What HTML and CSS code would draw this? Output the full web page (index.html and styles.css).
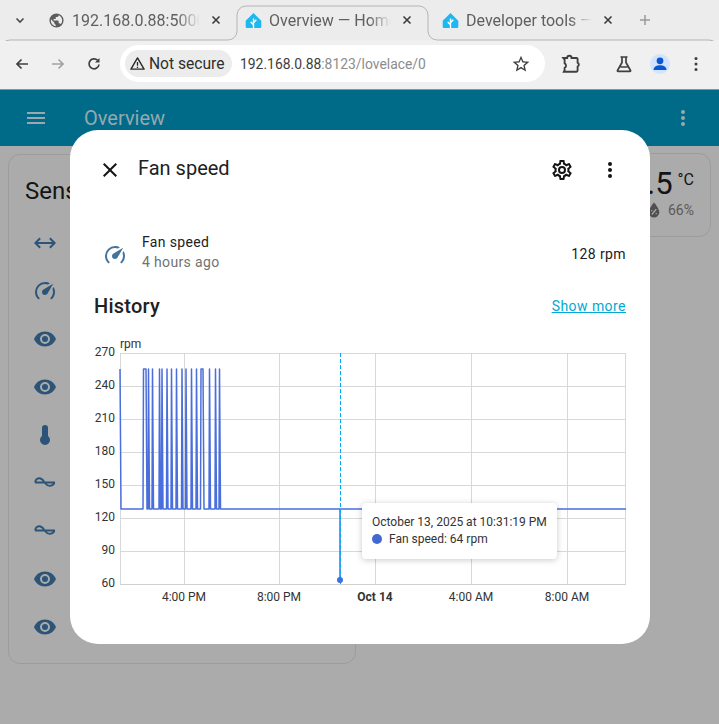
FILE: index.html
```html
<!DOCTYPE html>
<html lang="en">
<head>
<meta charset="utf-8">
<title>Overview – Home Assistant</title>
<link rel="stylesheet" href="styles.css">
</head>
<body>
<div class="window">
  <div class="tabstrip">
    <span class="tab-chevron"><svg viewBox="0 0 12 12" width="12" height="12"><path d="M2.5 4.5L6 8l3.5-3.5" class="stroke-dark"/></svg></span>
    <div class="tab tab-first">
      <svg class="favicon" viewBox="0 0 24 24"><path class="fill-grey" d="M17.9,17.39C17.64,16.59 16.89,16 16,16H15V13A1,1 0 0,0 14,12H8V10H10A1,1 0 0,0 11,9V7H13A2,2 0 0,0 15,5V4.59C17.93,5.77 20,8.64 20,12C20,14.08 19.2,15.97 17.9,17.39M11,19.93C7.05,19.44 4,16.08 4,12C4,11.38 4.08,10.78 4.21,10.21L9,15V16A2,2 0 0,0 11,18M12,2A10,10 0 0,0 2,12A10,10 0 0,0 12,22A10,10 0 0,0 22,12A10,10 0 0,0 12,2Z"/></svg>
      <span class="tab-title">192.168.0.88:5000</span>
      <svg class="tab-close" viewBox="0 0 12 12"><path d="M2.5 2.5l7 7m0-7l-7 7" class="stroke-close"/></svg>
    </div>
    <div class="tab tab-active">
      <svg class="favicon" viewBox="0 0 24 24"><path class="fill-ha" d="M12 1.5L23 12.5V21a1.5 1.5 0 0 1-1.500 1.500H2.500A1.500 1.500 0 0 1 1 21V12.500Z"/><path class="stroke-ha" d="M12 22.500V9M12 18l-4-4M12 15l4-4"/></svg>
      <span class="tab-title">Overview — Home Assistant</span>
      <svg class="tab-close" viewBox="0 0 12 12"><path d="M2.5 2.5l7 7m0-7l-7 7" class="stroke-close"/></svg>
    </div>
    <div class="tab tab-third">
      <svg class="favicon" viewBox="0 0 24 24"><path class="fill-ha" d="M12 1.5L23 12.5V21a1.5 1.500 0 0 1-1.500 1.500H2.500A1.500 1.500 0 0 1 1 21V12.500Z"/><path class="stroke-ha" d="M12 22.500V9M12 18l-4-4M12 15l4-4"/></svg>
      <span class="tab-title">Developer tools — Home</span>
      <svg class="tab-close" viewBox="0 0 12 12"><path d="M2.5 2.5l7 7m0-7l-7 7" class="stroke-close"/></svg>
    </div>
    <svg class="tab-plus" viewBox="0 0 12 12"><path d="M6 1v10M1 6h10" class="stroke-plus"/></svg>
    <svg class="tab-outline" viewBox="0 0 719 41"><path d="M0 48V50A10 10 0 0 1 10 40H228A9 9 0 0 0 237 31V15A9 9 0 0 1 246 6H419A9 9 0 0 1 428 15V31A9 9 0 0 0 437 40H709A10 10 0 0 1 719 50"/></svg>
  </div>

  <div class="toolbar">
    <svg class="tb-icon" viewBox="0 0 16 16"><path class="stroke-tb" d="M14 8H3M7.500 3.500L3 8l4.500 4.500"/></svg>
    <svg class="tb-icon tb-forward" viewBox="0 0 16 16"><path class="stroke-dim" d="M2 8h11M8.500 3.500L13 8l-4.500 4.500"/></svg>
    <svg class="tb-icon tb-reload" viewBox="0 0 16 16"><path class="stroke-tb" d="M13 8.500A5 5 0 1 1 11.500 4.200"/><path class="fill-tb" d="M13.500 2v4.500H9Z"/></svg>
    <div class="omnibox">
      <div class="security">
        <svg class="warn" viewBox="0 0 16 16"><path class="warn-shape" d="M8 2L15 14H1Z"/><path class="warn-mark" d="M8 6.500v4M8 11.500v1.300"/></svg>
        <span>Not secure</span>
      </div>
      <span class="url"><span class="url-host">192.168.0.88</span>:8123/lovelace/0</span>
      <svg class="star" viewBox="0 0 24 24"><path class="fill-tb" d="M12,15.39L8.24,17.66L9.23,13.38L5.91,10.5L10.29,10.13L12,6.090L13.710,10.130L18.090,10.500L14.770,13.380L15.760,17.660M22,9.240L14.810,8.630L12,2L9.190,8.630L2,9.240L7.450,13.970L5.820,21L12,17.270L18.180,21L16.540,13.970L22,9.240Z"/></svg>
    </div>
    <svg class="tb-icon tb-ext" viewBox="0 0 20 20"><path class="stroke-tb" d="M3 4.500h3.500a2 2 0 0 1 4 0H15a1 1 0 0 1 1 1v3.200a2 2 0 0 1 0 3.600V16a1 1 0 0 1-1 1H3.500l.7-1.300v-2.200a2.200 2.200 0 0 0 0-4V6Z"/></svg>
    <svg class="tb-icon tb-flask" viewBox="0 0 20 20"><path class="stroke-tb" d="M6.500 3h7M8 3v5.500L3.500 16.500a.6.6 0 0 0 .5.900h12a.6.6 0 0 0 .5-.900L12 8.500V3M6.500 13h7"/></svg>
    <span class="avatar"><svg viewBox="0 0 20 20" width="20" height="20"><circle class="fill-blue" cx="10" cy="6.800" r="3.400"/><path class="fill-blue" d="M3.500 16c0-3.500 3.500-4.700 6.500-4.700s6.500 1.200 6.500 4.700Z"/></svg></span>
    <svg class="tb-icon tb-menu" viewBox="0 0 16 16"><circle class="fill-tb" cx="8" cy="2.500" r="1.500"/><circle class="fill-tb" cx="8" cy="8" r="1.500"/><circle class="fill-tb" cx="8" cy="13.500" r="1.500"/></svg>
  </div>

  <div class="app">
    <header class="app-header">
      <svg class="header-icon" viewBox="0 0 24 24"><path d="M3,6H21V8H3V6M3,11H21V13H3V11M3,16H21V18H3V16Z"/></svg>
      <span class="header-title">Overview</span>
      <svg class="header-icon header-dots" viewBox="0 0 24 24"><path d="M12,16A2,2 0 0,1 14,18A2,2 0 0,1 12,20A2,2 0 0,1 10,18A2,2 0 0,1 12,16M12,10A2,2 0 0,1 14,12A2,2 0 0,1 12,14A2,2 0 0,1 10,12A2,2 0 0,1 12,10M12,4A2,2 0 0,1 14,6A2,2 0 0,1 12,8A2,2 0 0,1 10,6A2,2 0 0,1 12,4Z"/></svg>
    </header>
    <main class="cards">
      <section class="card card-sensors">
        <h2 class="card-title">Sensors</h2>
        <div class="sensor-row"><svg class="sensor-icon" viewBox="0 0 24 24"><path d="M6.450,17.450L1,12L6.450,6.550L7.860,7.960L4.830,11H19.170L16.140,7.960L17.550,6.550L23,12L17.550,17.450L16.140,16.040L19.170,13H4.830L7.860,16.040L6.450,17.450Z"/></svg></div>
        <div class="sensor-row"><svg class="sensor-icon" viewBox="0 0 24 24"><path d="M12,16A3,3 0 0,1 9,13C9,11.880 9.610,10.900 10.500,10.390L20.210,4.770L14.680,14.350C14.180,15.330 13.170,16 12,16M12,3C13.810,3 15.500,3.500 16.970,4.320L14.870,5.530C14,5.190 13,5 12,5A8,8 0 0,0 4,13C4,15.210 4.890,17.210 6.340,18.650H6.350C6.740,19.040 6.740,19.670 6.350,20.060C5.960,20.450 5.320,20.450 4.930,20.070V20.070C3.120,18.260 2,15.760 2,13A10,10 0 0,1 12,3M22,13C22,15.760 20.880,18.260 19.070,20.070V20.070C18.680,20.450 18.050,20.450 17.660,20.060C17.270,19.670 17.270,19.040 17.660,18.650V18.650C19.110,17.200 20,15.210 20,13C20,12 19.810,11 19.460,10.100L20.670,8C21.500,9.500 22,11.180 22,13Z"/></svg></div>
        <div class="sensor-row"><svg class="sensor-icon" viewBox="0 0 24 24"><path d="M12,9A3,3 0 0,0 9,12A3,3 0 0,0 12,15A3,3 0 0,0 15,12A3,3 0 0,0 12,9M12,17A5,5 0 0,1 7,12A5,5 0 0,1 12,7A5,5 0 0,1 17,12A5,5 0 0,1 12,17M12,4.500C7,4.500 2.730,7.610 1,12C2.730,16.390 7,19.500 12,19.500C17,19.500 21.270,16.390 23,12C21.270,7.610 17,4.500 12,4.500Z"/></svg></div>
        <div class="sensor-row"><svg class="sensor-icon" viewBox="0 0 24 24"><path d="M12,9A3,3 0 0,0 9,12A3,3 0 0,0 12,15A3,3 0 0,0 15,12A3,3 0 0,0 12,9M12,17A5,5 0 0,1 7,12A5,5 0 0,1 12,7A5,5 0 0,1 17,12A5,5 0 0,1 12,17M12,4.500C7,4.500 2.730,7.610 1,12C2.730,16.390 7,19.500 12,19.500C17,19.500 21.270,16.390 23,12C21.270,7.610 17,4.500 12,4.500Z"/></svg></div>
        <div class="sensor-row"><svg class="sensor-icon" viewBox="0 0 24 24"><path d="M15 13V5A3 3 0 0 0 9 5V13A5 5 0 1 0 15 13Z"/></svg></div>
        <div class="sensor-row"><svg class="sensor-icon sensor-wave" viewBox="0 0 24 24"><path d="M2 11.500C3.500 6 8 6 11 10.500L12.500 12.500C14.500 15.500 19 16 21.500 12M2 11.500H22"/></svg></div>
        <div class="sensor-row"><svg class="sensor-icon sensor-wave" viewBox="0 0 24 24"><path d="M2 11.500C3.500 6 8 6 11 10.500L12.500 12.500C14.500 15.500 19 16 21.500 12M2 11.500H22"/></svg></div>
        <div class="sensor-row"><svg class="sensor-icon" viewBox="0 0 24 24"><path d="M12,9A3,3 0 0,0 9,12A3,3 0 0,0 12,15A3,3 0 0,0 15,12A3,3 0 0,0 12,9M12,17A5,5 0 0,1 7,12A5,5 0 0,1 12,7A5,5 0 0,1 17,12A5,5 0 0,1 12,17M12,4.500C7,4.500 2.730,7.610 1,12C2.730,16.390 7,19.500 12,19.500C17,19.500 21.270,16.390 23,12C21.270,7.610 17,4.500 12,4.500Z"/></svg></div>
        <div class="sensor-row"><svg class="sensor-icon" viewBox="0 0 24 24"><path d="M12,9A3,3 0 0,0 9,12A3,3 0 0,0 12,15A3,3 0 0,0 15,12A3,3 0 0,0 12,9M12,17A5,5 0 0,1 7,12A5,5 0 0,1 12,7A5,5 0 0,1 17,12A5,5 0 0,1 12,17M12,4.500C7,4.500 2.730,7.610 1,12C2.730,16.390 7,19.500 12,19.500C17,19.500 21.270,16.390 23,12C21.270,7.610 17,4.500 12,4.500Z"/></svg></div>
      </section>
      <section class="card card-weather">
        <div class="temp"><span class="temp-value">18.5</span><span class="temp-unit">°C</span></div>
        <div class="humidity">
          <svg class="drop" viewBox="0 0 24 24"><path class="fill-drop" d="M12,2C12,2 5,10 5,15A7,7 0 0,0 19,15C19,10 12,2 12,2Z"/><path class="drop-mark" d="M9 18l6-7M9 12v1.500M15 16v1.500"/></svg>
          <span>66%</span>
        </div>
      </section>
    </main>
  </div>

  <div class="dialog">
    <div class="dialog-head">
      <svg class="dlg-icon" viewBox="0 0 24 24"><path d="M19,6.410L17.590,5L12,10.590L6.410,5L5,6.410L10.590,12L5,17.590L6.410,19L12,13.410L17.590,19L19,17.590L13.410,12L19,6.410Z"/></svg>
      <h1 class="dialog-title">Fan speed</h1>
      <svg class="dlg-icon" viewBox="0 0 24 24"><path d="M12,8A4,4 0 0,1 16,12A4,4 0 0,1 12,16A4,4 0 0,1 8,12A4,4 0 0,1 12,8M12,10A2,2 0 0,0 10,12A2,2 0 0,0 12,14A2,2 0 0,0 14,12A2,2 0 0,0 12,10M10,22C9.750,22 9.540,21.820 9.500,21.580L9.130,18.930C8.500,18.680 7.960,18.340 7.440,17.940L4.950,18.950C4.730,19.030 4.460,18.950 4.340,18.730L2.340,15.270C2.210,15.050 2.270,14.780 2.460,14.630L4.570,12.970L4.500,12L4.570,11L2.460,9.370C2.270,9.220 2.210,8.950 2.340,8.730L4.340,5.270C4.460,5.050 4.730,4.960 4.950,5.050L7.440,6.050C7.960,5.660 8.500,5.320 9.130,5.070L9.500,2.420C9.540,2.180 9.750,2 10,2H14C14.250,2 14.460,2.180 14.500,2.420L14.870,5.070C15.500,5.320 16.040,5.660 16.560,6.050L19.050,5.050C19.270,4.960 19.540,5.050 19.660,5.270L21.660,8.730C21.790,8.950 21.730,9.220 21.540,9.370L19.430,11L19.500,12L19.430,13L21.540,14.630C21.730,14.780 21.790,15.050 21.660,15.270L19.660,18.730C19.540,18.950 19.270,19.040 19.050,18.950L16.560,17.950C16.040,18.340 15.500,18.680 14.870,18.930L14.500,21.580C14.460,21.820 14.250,22 14,22H10M11.250,4L10.880,6.610C9.680,6.860 8.620,7.500 7.850,8.390L5.440,7.350L4.690,8.650L6.800,10.200C6.400,11.370 6.400,12.640 6.800,13.800L4.680,15.360L5.430,16.660L7.860,15.620C8.630,16.500 9.680,17.140 10.870,17.380L11.240,20H12.760L13.130,17.390C14.320,17.140 15.370,16.500 16.140,15.620L18.570,16.660L19.320,15.360L17.200,13.810C17.600,12.640 17.600,11.370 17.200,10.200L19.310,8.650L18.560,7.350L16.150,8.390C15.380,7.500 14.320,6.860 13.120,6.620L12.750,4H11.250Z"/></svg>
      <svg class="dlg-icon" viewBox="0 0 24 24"><path d="M12,16A2,2 0 0,1 14,18A2,2 0 0,1 12,20A2,2 0 0,1 10,18A2,2 0 0,1 12,16M12,10A2,2 0 0,1 14,12A2,2 0 0,1 12,14A2,2 0 0,1 10,12A2,2 0 0,1 12,10M12,4A2,2 0 0,1 14,6A2,2 0 0,1 12,8A2,2 0 0,1 10,6A2,2 0 0,1 12,4Z"/></svg>
    </div>
    <div class="state-row">
      <svg class="state-icon" viewBox="0 0 24 24"><path d="M12,16A3,3 0 0,1 9,13C9,11.880 9.610,10.900 10.500,10.390L20.210,4.770L14.680,14.350C14.180,15.330 13.170,16 12,16M12,3C13.810,3 15.500,3.500 16.970,4.320L14.870,5.530C14,5.190 13,5 12,5A8,8 0 0,0 4,13C4,15.210 4.890,17.210 6.340,18.650H6.350C6.740,19.040 6.740,19.670 6.350,20.060C5.960,20.450 5.320,20.450 4.930,20.070V20.070C3.120,18.260 2,15.760 2,13A10,10 0 0,1 12,3M22,13C22,15.760 20.880,18.260 19.070,20.070V20.070C18.680,20.450 18.050,20.450 17.660,20.060C17.270,19.670 17.270,19.040 17.660,18.650V18.650C19.110,17.200 20,15.210 20,13C20,12 19.810,11 19.460,10.100L20.670,8C21.500,9.500 22,11.180 22,13Z"/></svg>
      <div class="state-text">
        <span class="state-name">Fan speed</span>
        <span class="state-time">4 hours ago</span>
      </div>
      <span class="state-value">128 rpm</span>
    </div>
    <div class="history-head">
      <h2 class="history-title">History</h2>
      <a class="show-more" href="#">Show more</a>
    </div>
    <div class="chart">
      <svg class="chart-svg" viewBox="0 0 540 262" width="540" height="262">
        <g class="grid">
          <path d="M26 14.500H532M26 47.500H532M26 80.500H532M26 113.500H532M26 146.500H532M26 179.500H532M26 212.500H532"/>
          <path d="M26.500 14V245M90.500 14V245M185.500 14V245M281.500 14V245M377.500 14V245M473.500 14V245M531.500 14V245"/>
          <path class="grid-base" d="M26 245.500H532"/>
        </g>
        <text class="axis-label" x="26" y="9">rpm</text>
        <g class="axis-y">
          <text x="21" y="17">270</text>
          <text x="21" y="50">240</text>
          <text x="21" y="83">210</text>
          <text x="21" y="116">180</text>
          <text x="21" y="149">150</text>
          <text x="21" y="182">120</text>
          <text x="21" y="215">90</text>
          <text x="21" y="248">60</text>
        </g>
        <g class="axis-x">
          <text x="90" y="262">4:00 PM</text>
          <text x="185" y="262">8:00 PM</text>
          <text class="axis-strong" x="281" y="262">Oct 14</text>
          <text x="377" y="262">4:00 AM</text>
          <text x="473" y="262">8:00 AM</text>
        </g>
        <path class="series" d="M26 30L27 170H49L49.500 30H52L53 170H54L54.500 30L55.500 170H58L58.500 30L59.500 170H65L65.500 30L66.500 170H67.500L68 30L69 170H72.500L73 30L74 170H77L77.500 30L78.500 170H82L82.500 30L83.500 170H87.500L88 30L89 170H91.500L92 30L93 170H97L97.500 30L98.500 170H102L102.500 30L103.500 170H106.500L107 30H109L110 170H115L115.500 30L116.500 170H121L121.500 30L122.500 170H125L125.500 30L126.500 170H246V241V170H532"/>
        <path class="cursor" d="M246.500 14V245"/>
        <circle class="cursor-dot" cx="246" cy="241" r="3"/>
      </svg>
      <div class="tooltip">
        <div class="tooltip-time">October 13, 2025 at 10:31:19 PM</div>
        <div class="tooltip-row"><span class="tooltip-dot"></span><span>Fan speed: 64 rpm</span></div>
      </div>
    </div>
  </div>
</div>
</body>
</html>
```

FILE: styles.css
```css
* { box-sizing: border-box; }
html, body { margin: 0; padding: 0; }
body { width: 719px; height: 724px; overflow: hidden; background: #ababab; font-family: Roboto, "Liberation Sans", sans-serif; color: #212121; }
h1, h2 { margin: 0; font-weight: 400; }
.window { position: relative; width: 719px; height: 724px; overflow: hidden; }

/* tab strip */
.tabstrip { position: relative; display: flex; align-items: center; height: 40px; background: #ececec; padding-top: 0; }
.tab-chevron { display: flex; justify-content: center; width: 40px; }
.tab { display: flex; align-items: center; height: 34px; margin-top: 0; font-size: 16px; color: #5f5f5f; }
.tab-first { width: 198px; padding-left: 8px; }
.tab-active { width: 191px; padding-left: 7px; }
.tab-third { width: 201px; padding-left: 13px; }
.favicon { flex: none; width: 17px; height: 17px; margin-right: 7px; }
.tab-title { flex: 1; overflow: hidden; white-space: nowrap; -webkit-mask-image: linear-gradient(to right, #000 82%, transparent); mask-image: linear-gradient(to right, #000 82%, transparent); }
.tab-close { flex: none; width: 12px; height: 12px; margin: 0 16px 0 10px; }
.tab-plus { width: 12px; height: 12px; margin-left: 9px; }
.tab-outline { position: absolute; left: 0; top: 0; width: 719px; height: 41px; fill: none; stroke: #b4b4b4; stroke-width: 1; }
.fill-grey { fill: #5c5c5c; }
.fill-ha { fill: #1cb8f0; }
.stroke-ha { fill: none; stroke: #fff; stroke-width: 2; }
.stroke-dark { fill: none; stroke: #4a4a4a; stroke-width: 1.6; }
.stroke-close { fill: none; stroke: #3c3c3c; stroke-width: 1.6; }
.stroke-plus { fill: none; stroke: #9a9a9a; stroke-width: 1.5; }

/* toolbar */
.toolbar { display: flex; align-items: center; height: 50px; background: #f0f0f0; border-bottom: 1px solid #8a9599; padding: 0 0 2px 14px; }
.tb-icon { flex: none; width: 16px; height: 16px; }
.tb-forward { margin-left: 20px; }
.tb-reload { margin-left: 20px; }
.tb-ext { width: 22px; height: 22px; margin-left: 15px; }
.tb-flask { width: 20px; height: 20px; margin-left: 32px; }
.tb-menu { margin-left: 18px; }
.stroke-tb { fill: none; stroke: #3f3f3f; stroke-width: 1.7; }
.stroke-dim { fill: none; stroke: #a2a2a2; stroke-width: 1.7; }
.fill-tb { fill: #3f3f3f; }
.fill-blue { fill: #0b57d0; }
.omnibox { display: flex; align-items: center; width: 425px; height: 37px; margin-left: 18px; padding: 0 14px 0 5px; background: #fff; border-radius: 19px; }
.security { display: flex; align-items: center; gap: 4px; height: 27px; width: 107px; padding: 0 7px 0 5px; background: #ececec; border-radius: 14px; font-size: 15.6px; color: #2f2f2f; white-space: nowrap; }
.warn { width: 15px; height: 15px; flex: none; }
.warn-shape { fill: none; stroke: #2a2a2a; stroke-width: 1.500; stroke-linejoin: round; }
.warn-mark { fill: none; stroke: #2a2a2a; stroke-width: 1.400; }
.url { flex: 1; margin-left: 8px; font-size: 13.9px; color: #8c8c8c; white-space: nowrap; }
.url-host { color: #3d3d3d; }
.star { flex: none; width: 20px; height: 20px; }
.avatar { display: flex; align-items: center; justify-content: center; flex: none; width: 20px; height: 20px; margin-left: 16px; background: #d3e3fd; border-radius: 50%; }

/* home assistant */
.app-header { display: flex; align-items: center; height: 56px; background: #006a89; padding: 0 24px; }
.header-icon { flex: none; width: 24px; height: 24px; fill: #9ba8ad; }
.header-title { flex: 1; margin-left: 36px; font-size: 20px; color: #96a8ae; }
.header-dots { margin-right: 0; }
.cards { display: flex; gap: 204px; align-items: flex-start; padding: 8px 8px 0; }
.card { flex: none; border: 1px solid #9c9c9c; border-radius: 12px; }
.card-sensors { width: 348px; height: 510px; padding: 20px 16px 0; }
.card-title { font-size: 24px; line-height: 32px; color: #141414; white-space: nowrap; }
.sensor-row { display: flex; align-items: center; height: 48px; padding-left: 8px; }
.sensor-row:first-of-type { margin-top: 12px; }
.sensor-icon { width: 24px; height: 24px; fill: #2c5478; }
.sensor-wave { fill: none; stroke: #2c5478; stroke-width: 1.800; }
.card-weather { width: 151px; height: 84px; margin-top: -1px; padding: 11px 16px 0 0; text-align: right; }
.temp { color: #141414; }
.temp-value { font-size: 31px; }
.temp-unit { font-size: 16px; margin-left: 5px; vertical-align: 9px; }
.humidity { display: flex; align-items: center; justify-content: flex-end; gap: 5px; margin-top: -1px; font-size: 14px; color: #5a5a5a; }
.drop { width: 18px; height: 18px; }
.fill-drop { fill: #4f4f4f; }
.drop-mark { fill: none; stroke: #ababab; stroke-width: 1.600; }

/* dialog */
.dialog { position: absolute; left: 70px; top: 130px; width: 580px; height: 514px; background: #fff; border-radius: 28px; padding: 0 24px; }
.dialog-head { display: flex; align-items: center; height: 80px; padding: 0 0 0 4px; margin-right: 4px; gap: 0; }
.dlg-icon { flex: none; width: 24px; height: 24px; fill: #141414; }
.dialog-head .dlg-icon:last-child { margin-left: 24px; }
.dialog-title { flex: 1; margin-left: 16px; margin-top: -5px; font-size: 20px; color: #212121; }
.state-row { display: flex; align-items: center; height: 48px; margin-top: 20px; }
.state-icon { flex: none; width: 24px; height: 24px; margin: 2px 0 0 9px; fill: #44739e; }
.state-text { display: flex; flex: 1; flex-direction: column; margin: -4px 0 0 15px; }
.state-name { font-size: 14px; line-height: 20px; letter-spacing: .35px; color: #212121; }
.state-time { font-size: 14px; line-height: 20px; letter-spacing: .35px; color: #727272; }
.state-value { font-size: 14px; letter-spacing: .4px; color: #212121; }
.history-head { display: flex; align-items: center; justify-content: space-between; margin-top: 14px; height: 28px; }
.history-title { font-size: 20px; font-weight: 500; letter-spacing: .25px; color: #212121; }
.show-more { font-size: 14px; letter-spacing: .45px; color: #03a9d4; text-decoration: underline; }

/* chart */
.chart { position: relative; height: 262px; margin-top: 19px; }
.chart-svg { display: block; margin-left: 0; overflow: visible; }
.grid path { fill: none; stroke: #d8d8d8; stroke-width: 1; }
.grid .grid-base { stroke: #d0d0d0; }
.axis-label { font-size: 12px; fill: #333; }
.axis-y text { font-size: 12px; fill: #333; text-anchor: end; }
.axis-x text { font-size: 12px; fill: #333; text-anchor: middle; }
.axis-x .axis-strong { font-weight: 700; }
.series { fill: none; stroke: #4a6fdc; stroke-width: 1.500; stroke-linejoin: round; }
.cursor { fill: none; stroke: #03a9f4; stroke-width: 1; stroke-dasharray: 4 2; }
.cursor-dot { fill: #3f6fe0; }
.tooltip { position: absolute; left: 268px; top: 164px; width: 195px; height: 56px; padding: 11px 10px; background: #fff; border-radius: 4px; box-shadow: 0 1px 6px rgba(0,0,0,.22); font-size: 12px; color: #333; white-space: nowrap; }
.tooltip-time { line-height: 16px; }
.tooltip-row { display: flex; align-items: center; height: 18px; margin-top: 0; }
.tooltip-dot { width: 10px; height: 10px; margin-right: 7px; background: #4269d0; border-radius: 50%; }
```
